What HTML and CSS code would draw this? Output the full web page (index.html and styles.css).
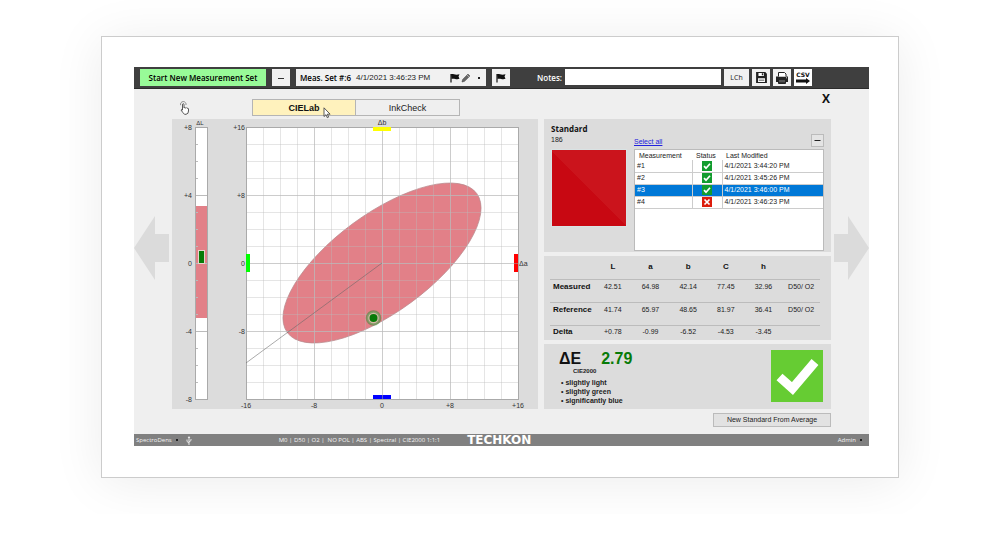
FILE: index.html
```html
<!DOCTYPE html>
<html lang="en">
<head>
<meta charset="utf-8">
<title>SpectroDens</title>
<link rel="stylesheet" href="styles.css">
</head>
<body>
<main class="card">
<div class="app">
  <header class="toolbar">
    <button class="start">Start New Measurement Set</button>
    <button class="square" aria-label="Remove set"><svg width="8" height="8" viewBox="0 0 8 8"><path d="M1 4.500h6" stroke="#333" stroke-width="1"/></svg></button>
    <button class="set">
      <b>Meas. Set #:6</b><span class="set-date">4/1/2021 3:46:23 PM</span>
      <svg width="10" height="10" viewBox="0 0 10 10"><path d="M1 1v8.500" stroke="#111" stroke-width="1.200"/><path d="M1 1.200C3 .2 4.500 2.500 9.500 1.300L8.500 3.500l1 2.300C6 7 4 4.800 1.500 6z" fill="#111"/></svg>
      <svg width="10" height="10" viewBox="0 0 10 10"><path d="M1 9l.7-2.600L7 1.100 8.900 3 3.500 8.300z" fill="#666" stroke="#444" stroke-width=".6"/><path d="M6 2l2 2" stroke="#eee" stroke-width=".5"/></svg>
      <span class="caret"></span>
    </button>
    <button class="square" aria-label="Flag"><svg width="10" height="10" viewBox="0 0 10 10"><path d="M1 1v8.500" stroke="#111" stroke-width="1.200"/><path d="M1 1.200C3 .2 4.500 2.500 9.500 1.300L8.500 3.500l1 2.300C6 7 4 4.800 1.500 6z" fill="#111"/></svg></button>
    <label class="notes-label" for="notes">Notes:</label>
    <input class="notes" id="notes" type="text">
    <div class="tools">
      <button class="lch">LCh</button>
      <button class="square" aria-label="Save"><svg width="13" height="13" viewBox="0 0 12 12"><path d="M1 1h8.500L11 2.500V11H1z" fill="#222"/><path d="M3.200 1.800h5v2.700h-5zM2.800 6.800h6.400v3.400H2.800z" fill="#fff"/><path d="M6.300 2h1.300v2H6.300zM3.500 8h5v.8h-5z" fill="#222"/></svg></button>
      <button class="square" aria-label="Print"><svg width="14" height="14" viewBox="0 0 14 14"><path d="M1 5.500h12V11h-2V9H3v2H1z" fill="#222"/><path d="M3.500 5.500v-4h6l1.500 1.500v2.500" fill="#fff" stroke="#222"/><path d="M3.500 8.500h7v4h-7z" fill="#333" stroke="#222"/><path d="M4 10h6" stroke="#aaa" stroke-width=".6"/><path d="M11 6.800h1" stroke="#fff" stroke-width=".8"/></svg></button>
      <button class="square csv"><span>CSV</span><svg width="14" height="6" viewBox="0 0 14 6"><path d="M0 1.500h10V0l4 3-4 3V4.500H0z" fill="#111"/></svg></button>
    </div>
  </header>

  <section class="workspace">
    <button class="arrow" aria-label="Previous"><svg width="35" height="64" viewBox="0 0 35 64"><path d="M0 32L21 0v18h14v28H21v18z" fill="#dbdbdb"/></svg></button>
    <div class="center">
      <div class="top-row">
        <svg class="hand" width="11" height="14" viewBox="0 0 11 14"><path d="M3.500 9V3.200q.8-1 1.500 0V7q.8-1 1.500 0 1-.8 1.500.3 1-.6 1.500.5V10q0 3-2.500 3.300H5.500Q4 12 2 9q.5-1 1.500 0z" fill="#fff" stroke="#444" stroke-width=".9"/><path d="M1.600 4.200A2.800 2.800 0 1 1 7 4" fill="none" stroke="#777" stroke-width=".8"/></svg>
        <nav class="tabs">
          <button class="tab active">CIELab<svg class="cursor" width="8" height="12" viewBox="0 0 8 12"><path d="M1 .8v8.700l2-1.800 1.300 3 1.300-.6-1.300-2.900h2.800z" fill="#fff" stroke="#333" stroke-width=".8"/></svg></button>
          <button class="tab">InkCheck</button>
        </nav>
        <button class="close">X</button>
      </div>
      <div class="panels">
        <div class="panel chart">
          <svg class="plot" viewBox="0 0 366 290" role="img" aria-label="Lab difference plot">
            <defs>
              <pattern id="minor" x="74" y="8" width="17" height="17" patternUnits="userSpaceOnUse"><path d="M0 .5h17M.5 0v17" stroke="#bbb" stroke-opacity=".38"/></pattern>
            </defs>
            <rect x="23.500" y="8.500" width="12" height="272" fill="#fff" stroke="#aaa"/>
            <rect x="24" y="87" width="11" height="112" fill="#e28088"/>
            <path d="M24 76.500h11M24 144.500h11M24 212.500h11" stroke="#bbb"/>
            <path d="M24 25.500h2M24 42.500h2M24 59.500h2M24 93.500h2M24 110.500h2M24 127.500h2M24 161.500h2M24 178.500h2M24 195.500h2M24 229.500h2M24 246.500h2M24 263.500h2" stroke="#bbb"/>
            <rect x="26.500" y="131.500" width="6" height="13" fill="#087b08" stroke="#e5d5cd"/>
            <rect x="74" y="8" width="272" height="272" fill="#fff"/>
            <ellipse cx="210" cy="144" rx="117.500" ry="49" transform="rotate(-36.300 210 144)" fill="#e28088" stroke="#b98a8e" stroke-width=".7"/>
            <rect x="74" y="8" width="272" height="272" fill="url(#minor)"/>
            <path d="M142.500 8v272M210.500 8v272M278.500 8v272M74 76.500h272M74 144.500h272M74 212.500h272" stroke="#bbb" stroke-opacity=".6"/>
            <rect x="74.500" y="8.500" width="272" height="272" fill="none" stroke="#aaa"/>
            <path d="M210 144L74 244" stroke="#666" stroke-opacity=".55"/>
            <circle cx="201.500" cy="199" r="6.500" fill="#d8b8a8" stroke="#2c8a2c" stroke-opacity=".5" stroke-width="2.500"/>
            <circle cx="201.500" cy="199" r="4" fill="#087b08"/>
            <path fill="#ff0" d="M201 8h18v4h-18z"/><path fill="#00f" d="M201 276h18v4h-18z"/>
            <path fill="#0f0" d="M74 135h4v18h-4z"/><path fill="#f00" d="M342 135h4v18h-4z"/>
            <path d="M210.500 276v4M342 144.500h4" stroke="#999" stroke-opacity=".6"/>
            <g class="axis">
              <g text-anchor="end"><text x="20" y="11">+8</text><text x="20" y="79">+4</text><text x="20" y="147">0</text><text x="20" y="215">-4</text><text x="20" y="283">-8</text>
              <text x="73" y="11">+16</text><text x="73" y="79">+8</text><text x="73" y="147">0</text><text x="73" y="215">-8</text></g>
              <g text-anchor="middle"><text class="tiny" x="28" y="6">ΔL</text><text x="74" y="289">-16</text><text x="142" y="289">-8</text><text x="210" y="289">0</text><text x="278" y="289">+8</text><text x="346" y="289">+16</text><text x="210" y="6">Δb</text></g>
              <text x="347" y="147">Δa</text>
            </g>
          </svg>
        </div>
        <div class="side">
          <section class="panel standard">
            <div class="std-left"><h2>Standard</h2><p>186</p><div class="swatch"></div></div>
            <div class="std-right">
              <div class="list-head"><a href="#all">Select all</a><button class="minus" aria-label="Collapse"><svg width="7" height="7" viewBox="0 0 7 7"><path d="M.5 3.500h6" stroke="#222"/></svg></button></div>
              <div class="list">
                <table class="samples" id="all">
                  <thead><tr><th class="c-name">Measurement</th><th class="c-status">Status</th><th>Last Modified</th></tr></thead>
                  <tbody>
                    <tr><td>#1</td><td class="status"><svg width="10" height="10" viewBox="0 0 10 10"><path fill="#129c2e" d="M0 0h10v10H0z"/><path d="M2 5.200l2 2 4-4.400" fill="none" stroke="#fff" stroke-width="1.700"/></svg></td><td>4/1/2021 3:44:20 PM</td></tr>
                    <tr><td>#2</td><td class="status"><svg width="10" height="10" viewBox="0 0 10 10"><path fill="#129c2e" d="M0 0h10v10H0z"/><path d="M2 5.200l2 2 4-4.400" fill="none" stroke="#fff" stroke-width="1.700"/></svg></td><td>4/1/2021 3:45:26 PM</td></tr>
                    <tr class="selected"><td>#3</td><td class="status"><svg width="10" height="10" viewBox="0 0 10 10"><path fill="#129c2e" d="M0 0h10v10H0z"/><path d="M2 5.200l2 2 4-4.400" fill="none" stroke="#fff" stroke-width="1.700"/></svg></td><td>4/1/2021 3:46:00 PM</td></tr>
                    <tr><td>#4</td><td class="status"><svg width="10" height="10" viewBox="0 0 10 10"><path fill="#dc1c0c" d="M0 0h10v10H0z"/><path d="M2.500 2.500l5 5M7.500 2.500l-5 5" stroke="#fff" stroke-width="1.700"/></svg></td><td>4/1/2021 3:46:23 PM</td></tr>
                  </tbody>
                </table>
              </div>
            </div>
          </section>
          <section class="panel values-panel">
            <table class="values">
              <thead><tr><td class="v-name"></td><th>L</th><th>a</th><th>b</th><th>C</th><th>h</th><td></td></tr></thead>
              <tbody>
                <tr><th class="v-name">Measured</th><td>42.51</td><td>64.98</td><td>42.14</td><td>77.45</td><td>32.96</td><td>D50/ O2</td></tr>
                <tr><th class="v-name">Reference</th><td>41.74</td><td>65.97</td><td>48.65</td><td>81.97</td><td>36.41</td><td>D50/ O2</td></tr>
                <tr class="last"><th class="v-name">Delta</th><td>+0.78</td><td>-0.99</td><td>-6.52</td><td>-4.53</td><td>-3.45</td><td></td></tr>
              </tbody>
            </table>
          </section>
          <section class="panel result">
            <div>
              <div class="delta"><span>ΔE</span><span class="score">2.79</span></div>
              <p class="formula">CIE2000</p>
              <ul class="hints"><li>• slightly light</li><li>• slightly green</li><li>• significantly blue</li></ul>
            </div>
            <svg width="52" height="52" viewBox="0 0 52 52" role="img" aria-label="Pass"><path fill="#66cc33" d="M0 0h52v52H0z"/><path d="M8.500 27L21.500 38.500 44 12" fill="none" stroke="#fff" stroke-width="9"/></svg>
          </section>
        </div>
      </div>
      <div class="actions"><button class="average">New Standard From Average</button></div>
    </div>
    <button class="arrow" aria-label="Next"><svg width="35" height="64" viewBox="0 0 35 64"><path d="M35 32L14 0v18H0v28h14v18z" fill="#dbdbdb"/></svg></button>
  </section>

  <footer class="statusbar">
    <button class="foot-menu">SpectroDens<span class="caret"></span></button>
    <svg class="usb" width="6" height="9" viewBox="0 0 6 9"><path d="M3 9V1M3 7L1 5.500V3.500M3 6l2-1.500V3" fill="none" stroke="#eee" stroke-width=".9"/><path d="M3 0l1.300 2H1.700z" fill="#eee"/></svg>
    <span class="mode">M0 | D50 | O2 |&nbsp; NO POL | ABS | Spectral | CIE2000 1:1:1</span>
    <span class="brand">TECHKON</span>
    <button class="foot-menu admin">Admin<span class="caret"></span></button>
  </footer>
</div>
</main>
</body>
</html>
```
FILE: styles.css
```css
* { box-sizing: border-box; }
body { margin: 0; padding: 36px 101px; background: #fff; font: 7px/10px "Liberation Sans", Arial, sans-serif; color: #222; }
button, input { margin: 0; padding: 0; border: 0; border-radius: 0; font: inherit; color: inherit; background: none; }
svg { display: block; flex: none; }
h2, p, ul { margin: 0; padding: 0; list-style: none; }
table { border-collapse: collapse; }
th, td { padding: 0; }

.card { padding: 30px 29px 31px 32px; border: 1px solid #ccc; background: #fff; box-shadow: 0 4px 48px rgba(0, 0, 0, .08); }
.app { background: #efefef; }

.toolbar { display: flex; gap: 6px; padding: 2px 6px; height: 22px; border-bottom: 1px solid #2b2b2b; background: #3f3f3f; font-family: "Open Sans", sans-serif; }
.toolbar button { display: flex; align-items: center; justify-content: center; height: 17px; background: #f1f1f1; }
.toolbar .start { width: 126px; background: #98fb98; font-size: 8px; font-weight: 600; color: #000; }
.toolbar .square { width: 18px; }
.toolbar .set { width: 190px; padding: 0 4px; font: 8px "Liberation Sans", sans-serif; justify-content: flex-start; gap: 1px; }
.set b { font: 600 8px "Open Sans", sans-serif; color: #000; }
.set-date { margin-left: 4px; margin-right: auto; }
.caret { width: 2px; height: 2px; margin: 0 2px 0 6px; background: #222; }
.notes-label { width: 46px; color: #fff; font-size: 8px; font-weight: 600; line-height: 17px; text-align: right; }
.notes { flex: 1; min-width: 60px; height: 16px; margin-left: -3px; padding: 0 4px; background: #fff; }
.tools { display: flex; gap: 3px; margin-left: -3px; margin-right: 51px; }
.toolbar .lch { width: 25px; }
.toolbar .csv { flex-direction: column; background: #fff; font: 700 6px/7px "DejaVu Sans", sans-serif; color: #111; }

.workspace { display: grid; grid-template-columns: 38px 1fr 38px; }
.arrow { display: flex; align-self: start; justify-content: flex-start; margin-top: 127px; }
.arrow:last-child { justify-content: flex-end; }
.top-row { display: flex; align-items: center; height: 30px; padding-top: 7px; }
.hand { margin: 0 62px 0 7px; }
.tabs { display: flex; }
.tab { position: relative; width: 104px; height: 17px; border: 1px solid #b5b5b5; font-size: 9px; }
.tab + .tab { border-left: 0; }
.tab.active { background: #fff2bd; font-weight: 700; color: #111; }
.cursor { position: absolute; right: 24px; top: 7px; }
.close { align-self: flex-start; margin: -4px 1px 0 auto; font: 700 12px/14px "Open Sans", sans-serif; color: #111; }

.panels { display: flex; gap: 6px; }
.panel { background: #dcdcdc; }
.chart { flex: 366; }
.plot { width: 100%; height: auto; }
.axis { font: 7px "Liberation Sans", sans-serif; fill: #333; }
.tiny { font-size: 6px; }
.side { display: flex; flex: 287; flex-direction: column; gap: 4px; }

.standard { display: flex; gap: 7px; height: 133px; padding: 4px 7px 1px; }
.std-left { width: 76px; }
.std-left h2 { font: 700 8px/11px "Open Sans", sans-serif; color: #111; }
.std-left p { line-height: 11px; }
.swatch { height: 78px; margin-top: 4px; border: 1px solid #d9e3e4; background: linear-gradient(45deg, #c80812 50%, #cb141c 50%); }
.std-right { display: flex; flex: 1; flex-direction: column; }
.list-head { display: flex; align-items: flex-end; justify-content: space-between; height: 24px; }
.list-head a { color: #2222dd; line-height: 10px; }
.minus { display: flex; align-items: center; justify-content: center; width: 13px; height: 13px; border: 1px solid #bbb; background: #e4e4e4; }
.list { flex: 1; margin-top: 2px; border: 1px solid #bbb; background: #fff; }
.samples { width: 100%; table-layout: fixed; }
.samples th { height: 10px; font-weight: 400; text-align: left; padding-left: 4px; line-height: 9px; }
.samples td { height: 12px; padding-left: 2px; border-bottom: 1px solid #ccc; }
.samples td + td { border-left: 1px solid #ccc; }
.samples .c-name { width: 57px; }
.samples .c-status { width: 30px; }
.samples .status { padding-left: 9px; }
.selected td { background: #0078d7; color: #fff; }

.values-panel { height: 84px; padding: 0 11px 0 6px; }
.values { width: 100%; table-layout: fixed; text-align: center; }
.values tr { height: 23px; border-bottom: 1px solid #bcbcbc; }
.values thead th { font-size: 8px; color: #111; }
.values tbody td, .values tbody th { padding-top: 2px; vertical-align: top; }
.values .v-name { width: 44px; padding-left: 3px; font-size: 8px; text-align: left; color: #111; }
.values .last { height: 14px; border: 0; }
.values .last td, .values .last th { padding-top: 1px; }

.result { display: flex; flex: 1; justify-content: space-between; padding: 6px 8px 0 15px; }
.delta { display: flex; gap: 20px; font: 700 16px/18px "Liberation Sans", sans-serif; color: #111; }
.score { color: #087b08; }
.formula { padding-left: 14px; font-weight: 700; font-size: 6px; line-height: 6px; }
.hints { padding: 4px 0 0 2px; font-weight: 700; line-height: 9px; }

.actions { display: flex; justify-content: flex-end; height: 25px; padding: 4px 0 7px; }
.average { width: 118px; border: 1px solid #bbb; background: #e2e2e2; }

.statusbar { display: flex; align-items: center; height: 12px; padding: 0 5px 0 2px; background: #808080; color: #f4f4f4; font: 6px/12px "Open Sans", sans-serif; }
.foot-menu { display: flex; align-items: center; }
.foot-menu .caret { margin: 0 2px 0 4px; }
.usb { margin-left: 6px; }
.mode { margin-left: 87px; }
.brand { margin-left: 27px; font: 700 12px/10px "DejaVu Sans", sans-serif; color: #fff; }
.admin { margin-left: auto; }
```
